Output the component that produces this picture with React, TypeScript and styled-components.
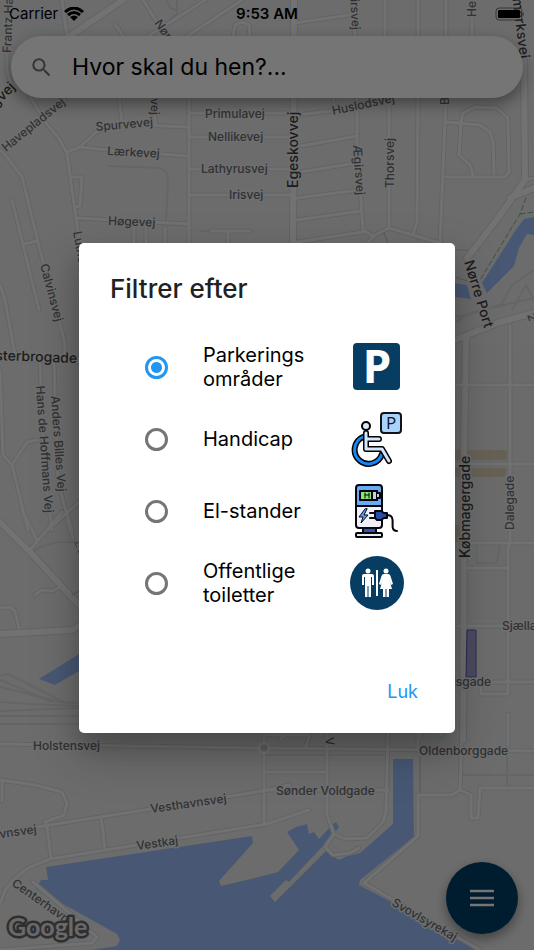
import React, { useState } from "react";
import styled, { createGlobalStyle } from "styled-components";

const GlobalStyle = createGlobalStyle`
  *, *::before, *::after { box-sizing: border-box; }
  body {
    margin: 0;
    background: #6d6e6e;
    font-family: Inter, "Liberation Sans", sans-serif;
    color: #000;
  }
`;

const Screen = styled.div`
  position: relative;
  display: flex;
  flex-direction: column;
  min-height: 100vh;
  overflow: hidden;
`;

const MapCanvas = styled.svg`
  position: absolute;
  inset: 0;
  width: 100%;
  height: 100%;
  background: #ececec;
`;

const StatusBar = styled.header`
  position: relative;
  display: grid;
  grid-template-columns: 1fr auto 1fr;
  align-items: center;
  height: 28px;
  padding: 0 9px;
  font-size: 15px;
  line-height: 20px;
`;

const Carrier = styled.div`
  display: flex;
  align-items: center;
  gap: 6px;
`;

const Clock = styled.time`
  font-weight: 600;
`;

const Battery = styled.svg`
  justify-self: end;
`;

const SearchBar = styled.label`
  position: relative;
  display: flex;
  align-items: center;
  gap: 20px;
  height: 62px;
  margin: 8px 11px 0;
  padding: 0 19px;
  border-radius: 31px;
  background: #fff;
  box-shadow: 0 6px 16px rgba(0, 0, 0, 0.4);
`;

const SearchInput = styled.input`
  flex: 1;
  min-width: 0;
  border: 0;
  outline: 0;
  padding: 0;
  background: transparent;
  font: 400 23px/32px Inter, "Liberation Sans", sans-serif;
  color: #000;
  &::placeholder { color: #000; opacity: 1; }
`;

const MenuButton = styled.button`
  position: absolute;
  right: 16px;
  bottom: 16px;
  display: grid;
  place-items: center;
  width: 72px;
  height: 72px;
  border: 0;
  padding: 0;
  border-radius: 50%;
  background: #003d68;
  box-shadow: 0 5px 12px rgba(0, 0, 0, 0.4);
`;

const Scrim = styled.div`
  position: absolute;
  inset: 0;
  display: flex;
  align-items: center;
  justify-content: center;
  padding: 26px 79px 0;
  background: rgba(0, 0, 0, 0.54);
`;

const Dialog = styled.form`
  display: flex;
  flex-direction: column;
  width: 100%;
  max-width: 480px;
  padding: 30px 31px 21px;
  border-radius: 5px;
  background: #fff;
  box-shadow: 0 14px 20px rgba(0, 0, 0, 0.16), 0 20px 48px 4px rgba(0, 0, 0, 0.2);
`;

const Title = styled.h1`
  margin: 0 0 26px;
  font-size: 26px;
  line-height: 32px;
  font-weight: 500;
  color: #212121;
`;

const Options = styled.div`
  display: flex;
  flex-direction: column;
  padding: 0 20px 0 35px;
`;

const Option = styled.label`
  display: flex;
  align-items: center;
  min-height: 72px;
  gap: 35px;
  font-size: 20px;
  line-height: 24px;
  cursor: pointer;
`;

const OptionName = styled.span`
  flex: 1;
  margin-right: -35px;
`;

const Radio = styled.input`
  appearance: none;
  flex: none;
  width: 23px;
  height: 23px;
  margin: 0;
  border: 3px solid #757575;
  border-radius: 50%;
  background: #fff;
  &:checked {
    border-color: #2196f3;
    background: radial-gradient(circle, #2196f3 0 5px, #fff 6px);
  }
`;

const Picture = styled.svg`
  flex: none;
  width: 56px;
  height: 56px;
`;

const Actions = styled.div`
  display: flex;
  justify-content: flex-end;
  margin-top: 53px;
`;

const CloseButton = styled.button`
  height: 40px;
  padding: 0 6px;
  border: 0;
  background: transparent;
  font: 400 18px/24px Inter, "Liberation Sans", sans-serif;
  color: #2196f3;
  cursor: pointer;
`;

const MapLabel = styled.text<{ $major?: boolean }>`
  font-family: Inter, "Liberation Sans", sans-serif;
  font-size: ${(p) => (p.$major ? "14px" : "12px")};
  font-weight: 500;
  fill: ${(p) => (p.$major ? "#3f4144" : "#6a6d71")};
  stroke: #f0f0f0;
  stroke-width: 3px;
  stroke-linejoin: round;
  paint-order: stroke;
`;

const LogoText = styled.text`
  font: 700 25px Lato, "Liberation Sans", sans-serif;
  fill: #e4e4e4;
  stroke: #666;
  stroke-width: 5px;
  stroke-linejoin: round;
  paint-order: stroke;
`;

const SignText = styled.text<{ $size: number; $weight: number; $tone: string }>`
  font-family: "Open Sans", "Liberation Sans", sans-serif;
  font-size: ${(p) => p.$size}px;
  font-weight: ${(p) => p.$weight};
  fill: ${(p) => p.$tone};
  text-anchor: middle;
`;

const streets = [
  "M7 52V70L13 92", "M62 0L67 36", "M115 24L123 36", "M143 0L176 52", "M205 0L147 37",
  "M242 0L186 37", "M233 37L235 25L242 22L249 25L250 36", "M294 23L350 15",
  "M352 0L357 60V145L363 230L373 236", "M385 0V98L389 98V228", "M418 0V98L417 222L413 235",
  "M446 0V98L440 243", "M472 0V36", "M65 100L45 116M0 150L7 157L22 177L40 250L44 265L62 332L65 345L64 358",
  "M30 96L45 122L58 137L67 153L72 190L82 260", "M67 152L80 147L95 133L115 124L190 127",
  "M80 147L108 150L187 156", "M189 98V243", "M119 97L122 123", "M155 110V124",
  "M71 177H82L80 206L75 207", "M77 218L187 224", "M134 226V243", "M146 226V243",
  "M165 228V243", "M211 231H250M228 231V243", "M12 200L39 310M24 244L37 241",
  "M190 113H290M190 137H290M190 169H290M190 195H290", "M297 115L331 111L390 98M333 98L335 108",
  "M301 146L357 136M301 172L356 163M297 198L359 190M297 220L361 211M297 242L363 232",
  "M367 243L375 235L389 228L413 235L440 243", "M446 122L480 125L490 132L493 142L494 174",
  "M461 122L463 113L475 107L497 108L508 118L509 172L505 177L446 177",
  "M461 122L459 155L470 165L473 175", "M534 178L525 180",
  "M0 285L5 300L15 355M0 370L3 455L12 465L28 530M12 465L27 442L38 440",
  "M40 362L44 470L52 530M54 362L58 480L64 505L72 530M79 502L48 530",
  "M22 510L37 540M67 520L73 538M62 512L30 550",
  "M35 595L42 590L52 591L62 586", "M0 608L10 607L15 611L19 628",
  "M0 744L264 748L534 751", "M0 780L35 785L62 792L67 803L64 815L45 822L47 827L51 858M2 782V801",
  "M0 834L37 827L226 797L267 790L290 785", "M101 817L105 850",
  "M0 905L5 890L15 878L28 868L50 859L267 824", "M264 730V824", "M33 882L80 922L97 937L92 943L0 950",
  "M327 730V815L334 834L345 839L367 838L383 822L386 812L388 730",
  "M334 834L325 847L333 855L350 853L359 848", "M267 772H326M267 790H388M267 735H310L305 748M285 735L280 740",
  "M418 730V750", "M418 795L452 795L460 790L462 730", "M418 795V836L364 883L480 950",
  "M460 790L471 795L471 818L478 818L480 788H534", "M267 824L309 810",
  "M510 325V540L508 550V680M508 714V745", "M455 385H534M455 464H534M468 543H534M467 568H507",
  "M455 626H534M480 682H534M481 685V694H508V685M420 738V730M441 735V730",
];

const avenues = [
  "M123 0L70 36", "M294 0L293 243", "M524 60L525 180L495 222L467 258",
  "M510 198L534 188", "M455 340L500 322L534 313", "M466 336L464 450L463 740",
  "M0 634L72 630L79 626", "M0 522L30 552L79 605", "M0 358L80 360",
];

const paths = [
  "M108 166L160 168L167 173L168 182L166 222", "M167 0L170 8L176 10M177 0V14L156 31",
  "M200 231H211", "M35 550L45 545L60 542L79 542", "M0 676L8 674L50 695L65 703H79",
  "M0 680L50 701L79 703M0 687L60 702M0 711L79 708M0 716L79 716M0 724H79M0 702L30 704L79 706",
  "M462 775H534M507 735V787M500 543L497 563H477L476 543",
  "M455 322L470 313L534 298M455 316L463 316M458 322L463 316L502 304L512 285L534 270M512 310L526 285L534 300M455 250H480",
  "M389 755V785M267 755H385",
];

type Label = { t: string; x: number; y: number; r?: number; major?: boolean; end?: boolean };

const labels: Label[] = [
  { t: "Frantz Ha", x: 11, y: 53, r: -88 },
  { t: "Nør", x: 154, y: 23, r: 56 },
  { t: "Ægirsvej", x: 352, y: 30, r: 87, end: true },
  { t: "He", x: 476, y: 17, r: -90 },
  { t: "Danmarksvej", x: 520, y: 59, r: 83, major: true, end: true },
  { t: "Ringvej", x: 16, y: 88, r: -45, major: true, end: true },
  { t: "Havepladsvej", x: 6, y: 152, r: -39 },
  { t: "vej", x: 151, y: 115, r: 88, end: true },
  { t: "Spurvevej", x: 96, y: 131, r: -5 },
  { t: "Lærkevej", x: 107, y: 155, r: 3 },
  { t: "Høgevej", x: 108, y: 225, r: 2 },
  { t: "Primulavej", x: 205, y: 118 },
  { t: "Nellikevej", x: 208, y: 141 },
  { t: "Lathyrusvej", x: 201, y: 173 },
  { t: "Irisvej", x: 229, y: 199 },
  { t: "Egeskovvej", x: 298, y: 188, r: -90, major: true },
  { t: "Huslodsvej", x: 333, y: 115, r: -12 },
  { t: "Ægirsvej", x: 353, y: 145, r: 86 },
  { t: "Thorsvej", x: 394, y: 188, r: -90 },
  { t: "B", x: 449, y: 105, r: -90 },
  { t: "Luthersvej", x: 73, y: 232, r: 80 },
  { t: "Calvinsvej", x: 40, y: 265, r: 75 },
  { t: "Vesterbrogade", x: 77, y: 363, r: 2, major: true, end: true },
  { t: "Hans de Hoffmans Vej", x: 36, y: 386, r: 86 },
  { t: "Anders Billes Vej", x: 51, y: 396, r: 86 },
  { t: "Nørre Port", x: 464, y: 262, r: 73, major: true },
  { t: "Købmagergade", x: 470, y: 558, r: -90, major: true },
  { t: "Dalegade", x: 514, y: 530, r: -90 },
  { t: "2", x: 527, y: 315, r: 70 },
  { t: "Sjællandsgade", x: 502, y: 630 },
  { t: "Sjællandsgade", x: 491, y: 686, end: true },
  { t: "Oldenborggade", x: 419, y: 755 },
  { t: "Holstensvej", x: 33, y: 750 },
  { t: "V", x: 325, y: 738, r: 80 },
  { t: "Vesthavnsvej", x: 151, y: 813, r: -8 },
  { t: "Vesthavnsvej", x: 37, y: 833, r: -8, end: true },
  { t: "Vestkaj", x: 137, y: 850, r: -8 },
  { t: "Sønder Voldgade", x: 276, y: 795 },
  { t: "Centerhavnsvej", x: 11, y: 885, r: 35 },
  { t: "Svovlsyrekaj", x: 391, y: 905, r: 30 },
];

function CityMap() {
  return (
    <MapCanvas viewBox="0 0 534 950" preserveAspectRatio="xMidYMid slice" aria-label="Kort">
      <path fill="#e6e9e8" d="M455 345H534V620H455ZM0 0H60L66 36H0Z" />
      <g fill="#9dc1fc">
        <path d="M503 250L515 231L524 219L534 217V235L527 234L519 248L514 266L487 293L482 283ZM455 283L467 285L471 299L455 297Z" />
        <path d="M39 679L79 654V671L55 685Z" />
        <path d="M46 867L252 836L253 843L219 881L221 886L267 875L278 872L299 850L287 832L296 827L307 824L309 834L314 832L319 839L333 824L336 822L339 827L334 834L325 847L332 855L339 860L347 856L360 853L393 824V759H413L414 837L360 880L359 885L482 950H92L117 946L120 940L117 934L36 889L41 880H48Z" />
      </g>
      <path fill="#ececec" d="M270 896L286 880L289 882L323 846L327 850L275 902Z" />
      <g fill="#e0d3ba">
        <path d="M455 450H507V460H455ZM455 468H507L505 477H455ZM455 525H460V542H455Z" />
      </g>
      <g fill="none" strokeLinejoin="round" strokeLinecap="round">
        <g stroke="#dadce0" strokeWidth="2">
          {paths.map((d) => <path key={d} d={d} />)}
        </g>
        <g stroke="#d5d8dc" strokeWidth="5">
          {streets.map((d) => <path key={d} d={d} />)}
        </g>
        <g stroke="#d5d8dc" strokeWidth="8">
          {avenues.map((d) => <path key={d} d={d} />)}
        </g>
        <g stroke="#f6f6f6" strokeWidth="3">
          {streets.map((d) => <path key={d} d={d} />)}
        </g>
        <g stroke="#f8f8f8" strokeWidth="6">
          {avenues.map((d) => <path key={d} d={d} />)}
        </g>
        <g stroke="#76b58a" strokeDasharray="5 3">
          <path d="M526 198L520 214L480 280M520 214L534 212M75 543H79M75 543L79 553" />
        </g>
        <path stroke="#a9cdb4" d="M384 233L388 243M455 277L467 281M72 595L79 591M420 757V792" />
      </g>
      <circle cx="264" cy="748" r="5" fill="#cfd2d6" stroke="#f8f8f8" strokeWidth="3" />
      <path fill="#a4a4d4" stroke="#5a5ab8" d="M467 630H476V677H466Z" />
      {labels.map((l, i) => (
        <MapLabel
          key={i}
          $major={l.major}
          textAnchor={l.end ? "end" : "start"}
          transform={`translate(${l.x} ${l.y}) rotate(${l.r ?? 0})`}
        >
          {l.t}
        </MapLabel>
      ))}
      <LogoText x="8" y="936">Google</LogoText>
    </MapCanvas>
  );
}

function ParkingPicture() {
  return (
    <Picture viewBox="0 0 56 56" aria-hidden="true">
      <rect x="5" y="4" width="47" height="47" rx="4" fill="#083d63" />
      <SignText x="29" y="44" $size={46} $weight={700} $tone="#fff">P</SignText>
    </Picture>
  );
}

function WheelchairPicture() {
  return (
    <Picture viewBox="0 0 56 56" aria-hidden="true">
      <rect x="33" y="2" width="20" height="20" rx="3" fill="#a8d3fb" stroke="#10151c" strokeWidth="2" />
      <SignText x="43" y="18" $size={17} $weight={400} $tone="#10151c">P</SignText>
      <g fill="none" strokeLinecap="round" strokeLinejoin="round">
        <path d="M15 26A14 14 0 1 0 34 43" stroke="#000" strokeWidth="6" />
        <path d="M15 26A14 14 0 1 0 34 43" stroke="#1688f5" strokeWidth="3" />
        <path d="M18 22V38H34L41 50M18 28H31" stroke="#000" strokeWidth="6" />
        <path d="M18 22V38H34L41 50M18 28H31" stroke="#d4e7fb" strokeWidth="3" />
      </g>
      <circle cx="18" cy="15" r="4" fill="#d4e7fb" stroke="#000" strokeWidth="2" />
    </Picture>
  );
}

function ChargerPicture() {
  return (
    <Picture viewBox="0 0 56 56" aria-hidden="true">
      <g stroke="#05070b" strokeWidth="2" strokeLinejoin="round" strokeLinecap="round">
        <path d="M15 45H28V50H15Z" fill="#2d56b4" />
        <path d="M8 23V5Q8 2 11 2H31Q34 2 34 5V23Z" fill="#6aa9f6" />
        <path d="M8 23H34V42Q34 45 31 45H11Q8 45 8 42Z" fill="#f1f0f8" />
        <rect x="8" y="50" width="26" height="4" rx="1" fill="#e7e8f0" />
        <path d="M12 8H29V17H12Z" fill="#8fe37a" />
        <path d="M24 8H29V17H24Z" fill="#cfcade" />
        <path d="M29 10H32V15H29" fill="#cfcade" />
        <path d="M17 10V15M21 10V15M17 12H21" fill="none" strokeWidth="1" />
        <path d="M17 26L11 34H15L13 40L20 32H16L19 26Z" fill="#5b9ef5" strokeWidth="1" />
        <path d="M22 30H27M22 35H27M38 32C51 31 39 48 49 48" fill="none" />
        <path d="M27 28H33L36 30H39V35H36L33 37H29L27 35Z" fill="#274caa" />
      </g>
    </Picture>
  );
}

function ToiletPicture() {
  return (
    <Picture viewBox="0 0 56 56" aria-hidden="true">
      <circle cx="29" cy="28" r="27" fill="#083d63" />
      <g fill="#fff">
        <circle cx="20" cy="16" r="2.500" />
        <path d="M16 19H24Q26 19 26 21V30H24V22H23V42H20.500V31H19.500V42H17V22H16V30H14V21Q14 19 16 19Z" />
        <path d="M28 15H30V41H28Z" />
        <circle cx="38" cy="16" r="2.500" />
        <path d="M36 19H40Q42 19 42.500 21L45 29L43 30L41 24L44 34H41V42H38.500V34H37.500V42H35V34H32L35 24L33 30L31 29L33.500 21Q34 19 36 19Z" />
      </g>
    </Picture>
  );
}

const filters = [
  { id: "parking", name: "Parkerings områder", Art: ParkingPicture },
  { id: "handicap", name: "Handicap", Art: WheelchairPicture },
  { id: "charger", name: "El-stander", Art: ChargerPicture },
  { id: "toilet", name: "Offentlige toiletter", Art: ToiletPicture },
];

export default function App() {
  const [selected, setSelected] = useState("parking");
  const [open, setOpen] = useState(true);

  return (
    <Screen>
      <GlobalStyle />
      <CityMap />
      <StatusBar>
        <Carrier>
          Carrier
          <svg width="20" height="14" viewBox="0 0 20 14" aria-hidden="true">
            <g fill="none" stroke="#000" strokeWidth="3">
              <path d="M1 5Q10 -3 19 5M4 8Q10 3 16 8" />
            </g>
            <path d="M6 10Q10 7 14 10L10 14Z" />
          </svg>
        </Carrier>
        <Clock>9:53 AM</Clock>
        <Battery width="30" height="14" viewBox="0 0 30 14" aria-hidden="true">
          <rect x="1" y="1" width="26" height="12" rx="3" fill="none" stroke="#777" />
          <rect x="3" y="3" width="22" height="8" rx="1" />
          <path d="M28 5Q30 7 28 9Z" fill="#777" />
        </Battery>
      </StatusBar>
      <SearchBar>
        <svg width="22" height="22" viewBox="0 0 24 24" aria-hidden="true">
          <path
            fill="#757575"
            d="M16.500 15h-.8l-.3-.3A6.500 6.500 0 0 0 17 10.500 6.500 6.500 0 1 0 10.500 17c1.600 0 3.100-.6 4.200-1.600l.3.3v.8l5 5 1.500-1.500zM10.500 15a4.500 4.500 0 1 1 0-9 4.500 4.500 0 0 1 0 9z"
            transform="translate(-2 -2) scale(1.120)"
          />
        </svg>
        <SearchInput type="search" aria-label="Søg destination" placeholder="Hvor skal du hen?..." />
      </SearchBar>
      <MenuButton type="button" aria-label="Menu" onClick={() => setOpen(true)}>
        <svg width="24" height="18" viewBox="0 0 24 18" aria-hidden="true">
          <path d="M0 2H24M0 9H24M0 16H24" stroke="#fff" strokeWidth="2.600" />
        </svg>
      </MenuButton>
      {open && (
        <Scrim>
          <Dialog role="dialog" aria-labelledby="filter-title" onSubmit={(e) => e.preventDefault()}>
            <Title id="filter-title">Filtrer efter</Title>
            <Options role="radiogroup" aria-labelledby="filter-title">
              {filters.map(({ id, name, Art }) => (
                <Option key={id}>
                  <Radio
                    type="radio"
                    name="filter"
                    value={id}
                    checked={selected === id}
                    onChange={() => setSelected(id)}
                  />
                  <OptionName>{name}</OptionName>
                  <Art />
                </Option>
              ))}
            </Options>
            <Actions>
              <CloseButton type="button" onClick={() => setOpen(false)}>Luk</CloseButton>
            </Actions>
          </Dialog>
        </Scrim>
      )}
    </Screen>
  );
}
